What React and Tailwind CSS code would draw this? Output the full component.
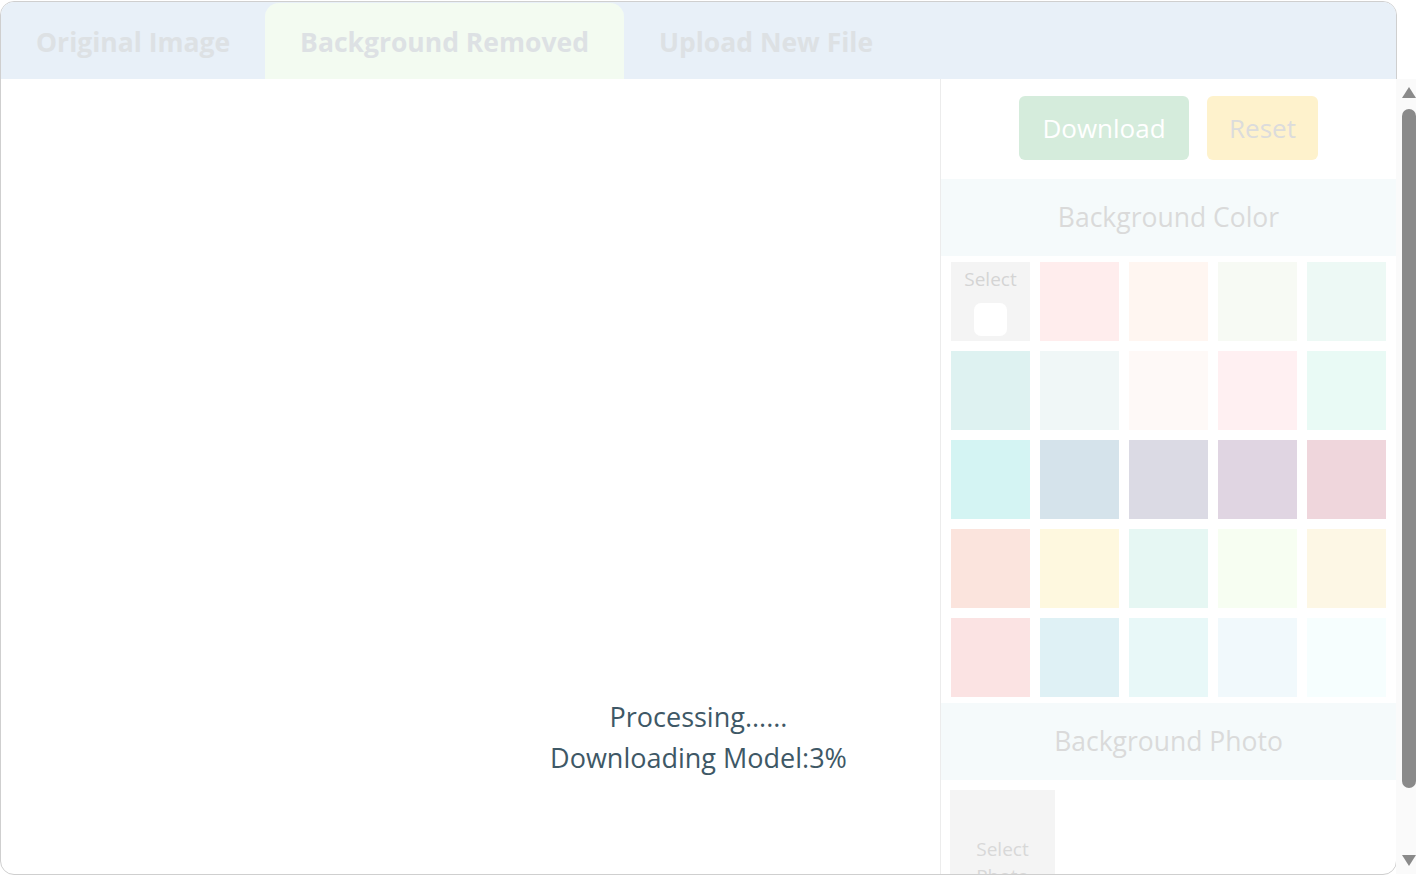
import React from "react";

const tabs = [
  { label: "Original Image", active: false },
  { label: "Background Removed", active: true },
  { label: "Upload New File", active: false },
];

const colors = [
  "#ffeded", "#fff6f1", "#f7faf4", "#edf9f5",
  "#def2f1", "#f0f7f7", "#fef9f7", "#fff0f2", "#e9faf5",
  "#d4f4f3", "#d5e3eb", "#dbdae4", "#e0d5e2", "#efd6dc",
  "#fbe4dd", "#fef8df", "#e6f7f3", "#f7fef2", "#fdf7e5",
  "#fbe3e3", "#dff1f5", "#e8f8f8", "#f1f9fc", "#f6fefe",
];

function SectionTitle({ children }) {
  return (
    <div className="h-[77px] bg-[#f5fafb] flex items-center justify-center text-[26.5px] text-[#dadada]">
      {children}
    </div>
  );
}

function Scrollbar() {
  return (
    <div className="w-[20px] shrink-0 bg-[#fafafa] flex flex-col pl-[6px]">
      <div className="mt-[8px] h-[12px] flex justify-center">
        <div className="w-0 h-0 border-x-[7px] border-x-transparent border-b-[11px] border-b-[#8a8a8a]" />
      </div>
      <div className="mt-[10px] h-[679px] rounded-[7px] bg-[#8a8a8a]" />
      <div className="mt-[67px] h-[12px] flex justify-center">
        <div className="w-0 h-0 border-x-[7px] border-x-transparent border-t-[11px] border-t-[#8a8a8a]" />
      </div>
    </div>
  );
}

export default function App() {
  return (
    <div
      className="w-[1416px] h-[879px] bg-white overflow-hidden"
      style={{ fontFamily: '"Open Sans", "Noto Sans", sans-serif' }}
    >
      <div className="relative mt-px w-[1397px] h-[874px] rounded-[14px] border border-[#cfcfcf] flex flex-col">
        {/* Tabs */}
        <div className="h-[77px] shrink-0 bg-[#e8f0f8] rounded-t-[13px] flex items-end">
          {tabs.map((t) => (
            <div
              key={t.label}
              className={`h-[76px] px-[35px] pt-[3px] flex items-center text-[26.5px] font-bold text-[#dde1e4] ${
                t.active ? "bg-[#f3fbf1] rounded-t-[14px]" : ""
              }`}
            >
              {t.label}
            </div>
          ))}
        </div>

        {/* Body */}
        <div className="flex flex-1 min-h-0">
          <div className="w-[939px] shrink-0" />
          <div className="shrink-0 border-l border-[#ececec] flex">
            <div className="w-[455px] overflow-hidden rounded-br-[13px]">
              <div className="flex justify-center gap-[18px] pt-[17px] pb-[19px]">
                <button className="h-[64px] w-[170px] rounded-[6px] bg-[#d5ecdc] text-white text-[26px]">
                  Download
                </button>
                <button className="h-[64px] w-[111px] rounded-[6px] bg-[#fef2cc] text-[#dcdcdc] text-[26px]">
                  Reset
                </button>
              </div>

              <SectionTitle>Background Color</SectionTitle>

              <div className="grid grid-cols-5 gap-[10px] px-[10px] pt-[6px] pb-[6px]">
                <div className="h-[79px] bg-[#f4f4f4] flex flex-col items-center pt-[3px]">
                  <span className="text-[19px] text-[#d4d4d4] leading-[28px]">Select</span>
                  <div className="mt-[10px] w-[33px] h-[33px] rounded-[7px] bg-white" />
                </div>
                {colors.map((c, i) => (
                  <div key={i} className="h-[79px]" style={{ backgroundColor: c }} />
                ))}
              </div>

              <SectionTitle>Background Photo</SectionTitle>

              <div className="px-[9px] pt-[10px] pb-[14px]">
                <div className="w-[105px] h-[140px] bg-[#f4f4f4] pt-[46px] text-center text-[19px] leading-[27px] text-[#d8d8d8]">
                  Select Photo
                </div>
              </div>
            </div>
            <Scrollbar />
          </div>
        </div>

        {/* Progress overlay */}
        <div className="absolute left-0 right-0 top-[694px] text-center text-[27px] leading-[41px] text-[#3e5866] pointer-events-none">
          <div>Processing......</div>
          <div>Downloading Model:3%</div>
        </div>
      </div>
    </div>
  );
}
